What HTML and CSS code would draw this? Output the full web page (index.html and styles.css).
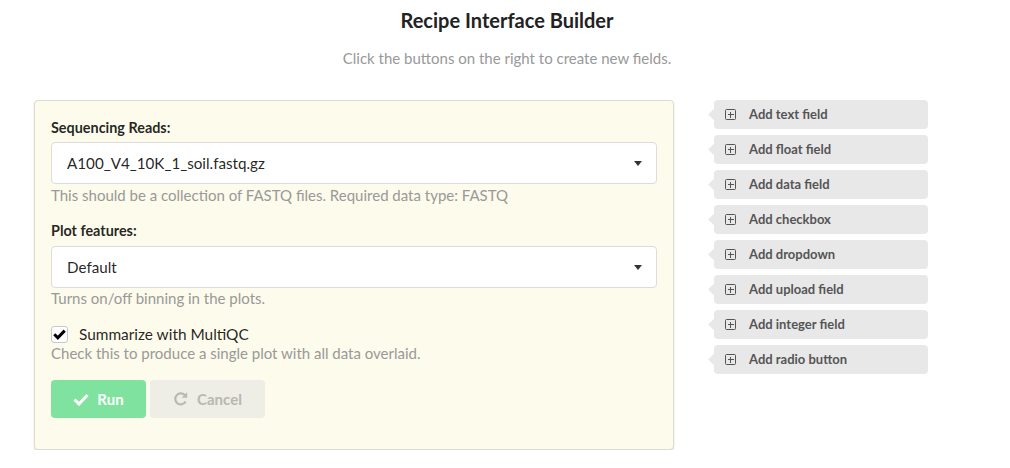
FILE: index.html
```html
<!DOCTYPE html>
<html>
<head>
<meta charset="utf-8">
<link rel="stylesheet" href="styles.css">
</head>
<body>
<div class="page">
  <h1 class="title">Recipe Interface Builder</h1>
  <p class="subtitle">Click the buttons on the right to create new fields.</p>
  <div class="main">
    <div class="panel">
      <div class="field">
        <label class="label">Sequencing Reads:</label>
        <div class="select"><span>A100_V4_10K_1_soil.fastq.gz</span><i class="caret"></i></div>
        <div class="help">This should be a collection of FASTQ files. Required data type: FASTQ</div>
      </div>
      <div class="field">
        <label class="label">Plot features:</label>
        <div class="select"><span>Default</span><i class="caret"></i></div>
        <div class="help">Turns on/off binning in the plots.</div>
      </div>
      <div class="field check-field">
        <div class="check-row">
          <span class="checkbox"><svg width="13" height="11" viewBox="0 0 13 11"><path d="M1.3 5.3 L4.8 8.8 L11.7 1.6" fill="none" stroke="#000" stroke-width="3"/></svg></span>
          <span class="check-label">Summarize with MultiQC</span>
        </div>
        <div class="help">Check this to produce a single plot with all data overlaid.</div>
      </div>
      <div class="actions">
        <button class="btn run"><svg width="16" height="13" viewBox="0 0 16 13"><path d="M1.5 6.5 L6 11 L14.5 2" fill="none" stroke="#fff" stroke-width="3"/></svg>Run</button>
        <button class="btn cancel"><svg width="16" height="16" viewBox="0 0 16 16"><path d="M12.6 10.5 A5.5 5.5 0 1 1 12.2 4.6" fill="none" stroke="#b9b9b4" stroke-width="2.2"/><path d="M14.2 1.2 L14.2 6.8 L8.6 6.8 Z" fill="#b9b9b4"/></svg>Cancel</button>
      </div>
    </div>
    <div class="adders">
      <div class="adder"><i class="plus"></i>Add text field</div>
      <div class="adder"><i class="plus"></i>Add float field</div>
      <div class="adder"><i class="plus"></i>Add data field</div>
      <div class="adder"><i class="plus"></i>Add checkbox</div>
      <div class="adder"><i class="plus"></i>Add dropdown</div>
      <div class="adder"><i class="plus"></i>Add upload field</div>
      <div class="adder"><i class="plus"></i>Add integer field</div>
      <div class="adder"><i class="plus"></i>Add radio button</div>
    </div>
  </div>
</div>
</body>
</html>
```

FILE: styles.css
```css
* { box-sizing: border-box; }
html, body { margin: 0; padding: 0; background: #fff; }
body {
  font-family: Lato, "Helvetica Neue", Arial, sans-serif;
  font-size: 15px;
  color: rgba(0,0,0,0.87);
}
.page { width: 1010px; padding-top: 8px; }
.title {
  margin: 0;
  text-align: center;
  font-size: 20px;
  font-weight: 700;
  line-height: 24px;
  color: #222;
  padding-left: 4px;
}
.subtitle {
  margin: 16px 0 0;
  text-align: center;
  font-size: 15px;
  line-height: 20px;
  color: #999;
  padding-left: 4px;
}
.main {
  display: flex;
  align-items: flex-start;
  margin-top: 32px;
  padding-left: 34px;
}
.panel {
  width: 640px;
  height: 350px;
  background: #fdfbeb;
  border: 1px solid #dedcd0;
  border-radius: 4px;
  box-shadow: 0 1px 2px rgba(34,36,38,0.15);
  padding: 15px 16px 0 16px;
}
.field { margin-bottom: 17px; }
.label {
  display: block;
  font-weight: 700;
  font-size: 14.4px;
  line-height: 18px;
  color: rgba(0,0,0,0.87);
  margin-top: 3px;
  margin-bottom: 5px;
}
.field + .field .label { margin-bottom: 6px; }
.select {
  display: flex;
  align-items: center;
  justify-content: space-between;
  height: 42px;
  background: #fff;
  border: 1px solid #dcdcdc;
  border-radius: 4px;
  padding: 0 14px 0 15px;
  font-size: 15.2px;
  color: rgba(0,0,0,0.87);
}
.caret {
  width: 0; height: 0;
  border-left: 4.5px solid transparent;
  border-right: 4.5px solid transparent;
  border-top: 5px solid #333;
}
.help {
  color: #999;
  font-size: 15px;
  line-height: 20px;
  margin-top: 1px;
}
.field + .field .help { margin-top: 0; }
.check-field { margin-top: 8px; margin-bottom: 17px; }
.check-row { display: flex; align-items: center; height: 18px; }
.checkbox {
  display: flex;
  align-items: center;
  justify-content: center;
  width: 17px; height: 17px;
  background: #fff;
  border: 1px solid #c8c8c8;
  border-radius: 3px;
  margin-right: 11px;
}
.check-label { font-size: 15.4px; color: rgba(0,0,0,0.87); }
.actions { display: flex; gap: 4px; }
.btn {
  display: flex;
  align-items: center;
  justify-content: center;
  gap: 8px;
  height: 38px;
  border: none;
  border-radius: 4px;
  font-family: Lato, Arial, sans-serif;
  font-weight: 700;
  font-size: 15px;
  padding: 0;
}
.run { width: 95px; background: #80e29f; color: #fff; }
.cancel { width: 115px; background: #eeede6; color: #b8b8b3; }
.adders {
  display: flex;
  flex-direction: column;
  gap: 6px;
  margin-left: 40px;
}
.adder {
  position: relative;
  display: flex;
  align-items: center;
  width: 214px;
  height: 29px;
  background: #e8e8e8;
  border-radius: 4px;
  padding-left: 35px;
  padding-bottom: 1px;
  font-size: 13px;
  font-weight: 700;
  color: #555;
}
.adder::before {
  content: "";
  position: absolute;
  left: -4px;
  top: 50%;
  width: 9px;
  height: 9px;
  margin-top: -4.5px;
  background: #e8e8e8;
  transform: rotate(45deg);
}
.plus {
  position: absolute;
  left: 11px;
  top: 9px;
  width: 11px;
  height: 11px;
  border: 1.3px solid #555;
  border-radius: 1.5px;
}
.plus::before, .plus::after {
  content: "";
  position: absolute;
  background: #555;
}
.plus::before { left: 1.5px; right: 1.5px; top: 3.5px; height: 1.3px; }
.plus::after { top: 1.5px; bottom: 1.5px; left: 3.5px; width: 1.3px; }
```
